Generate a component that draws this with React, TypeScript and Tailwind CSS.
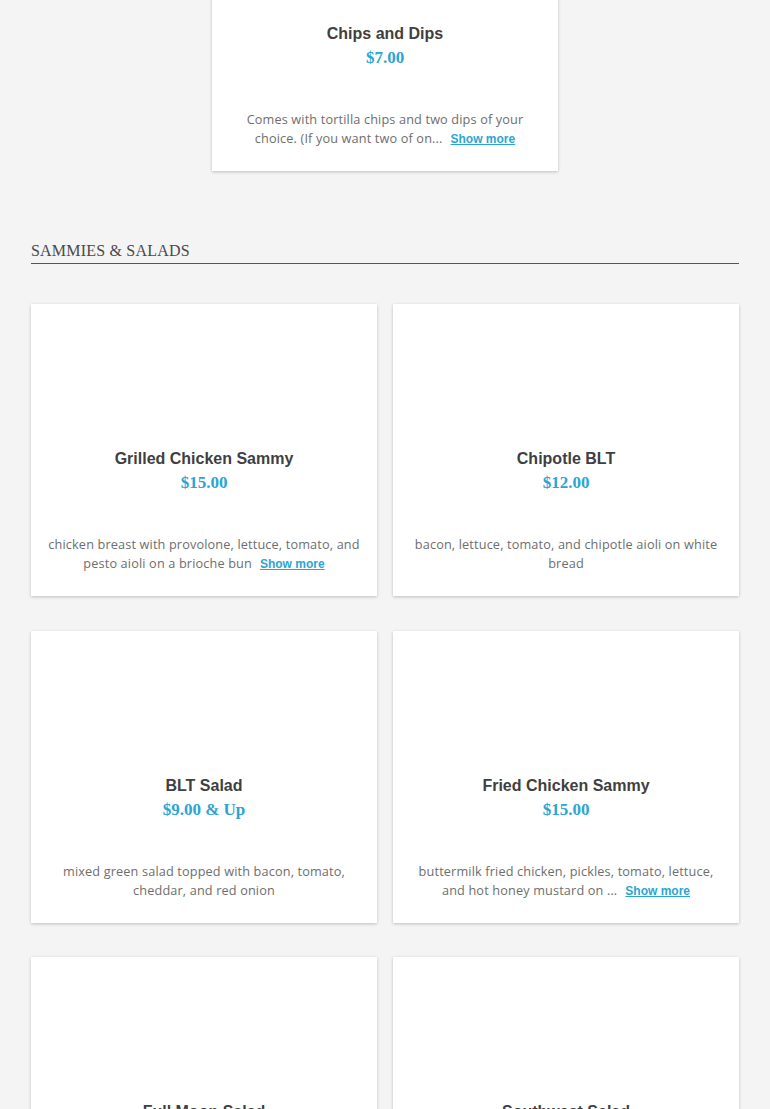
import React from "react";

type Item = {
  title: string;
  price: string;
  lines: string[];
  more?: boolean;
};

const items: Item[] = [
  {
    title: "Grilled Chicken Sammy",
    price: "$15.00",
    lines: ["chicken breast with provolone, lettuce, tomato, and", "pesto aioli on a brioche bun"],
    more: true,
  },
  {
    title: "Chipotle BLT",
    price: "$12.00",
    lines: ["bacon, lettuce, tomato, and chipotle aioli on white", "bread"],
  },
  {
    title: "BLT Salad",
    price: "$9.00 & Up",
    lines: ["mixed green salad topped with bacon, tomato,", "cheddar, and red onion"],
  },
  {
    title: "Fried Chicken Sammy",
    price: "$15.00",
    lines: ["buttermilk fried chicken, pickles, tomato, lettuce,", "and hot honey mustard on ..."],
    more: true,
  },
  { title: "Full Moon Salad", price: "$12.00", lines: ["", ""] },
  { title: "Southwest Salad", price: "$12.00", lines: ["", ""] },
];

function Card({ item }: { item: Item }) {
  return (
    <div className="h-[292px] w-[346px] bg-white shadow-[0_1px_3px_rgba(0,0,0,0.22)] flex flex-col items-center px-4 pt-[145px]">
      <div className="font-['Liberation_Sans',Arial,sans-serif] font-bold text-[16px] leading-[20px] text-[#3f3f3f] text-center">
        {item.title}
      </div>
      <div className="mt-[2px] font-['Liberation_Serif','Times_New_Roman',serif] font-bold text-[17px] leading-[24px] text-[#2ba5d4] text-center">
        {item.price}
      </div>
      <div className="mt-[40px] font-['Open_Sans',sans-serif] text-[12.7px] leading-[19px] text-[#6e6e6e] text-center tracking-[0.15px]">
        {item.lines.map((l, i) => (
          <div key={i} className="whitespace-nowrap">
            {l}
            {item.more && i === item.lines.length - 1 && (
              <span className="ml-[8px] font-['Liberation_Sans',Arial,sans-serif] font-bold text-[12px] text-[#2ba5d4] underline tracking-normal">
                Show more
              </span>
            )}
          </div>
        ))}
      </div>
    </div>
  );
}

export default function App() {
  return (
    <div className="min-h-[1109px] bg-[#f4f4f4] overflow-hidden">
      <div className="mx-[31px]">
        <div className="flex justify-center mt-[-121px]">
          <Card
            item={{
              title: "Chips and Dips",
              price: "$7.00",
              lines: ["Comes with tortilla chips and two dips of your", "choice. (If you want two of on..."],
              more: true,
            }}
          />
        </div>
        <div className="mt-[70px] border-b border-[#555] pb-[2px]">
          <div className="font-['Liberation_Serif','Times_New_Roman',serif] text-[16px] leading-[20px] text-[#4a4a4a] tracking-[0.2px]">
            SAMMIES &amp; SALADS
          </div>
        </div>
        <div className="mt-[40px] grid grid-cols-2 gap-x-[16px] gap-y-[34.5px]">
          {items.map((it, i) => (
            <Card key={i} item={it} />
          ))}
        </div>
      </div>
    </div>
  );
}
